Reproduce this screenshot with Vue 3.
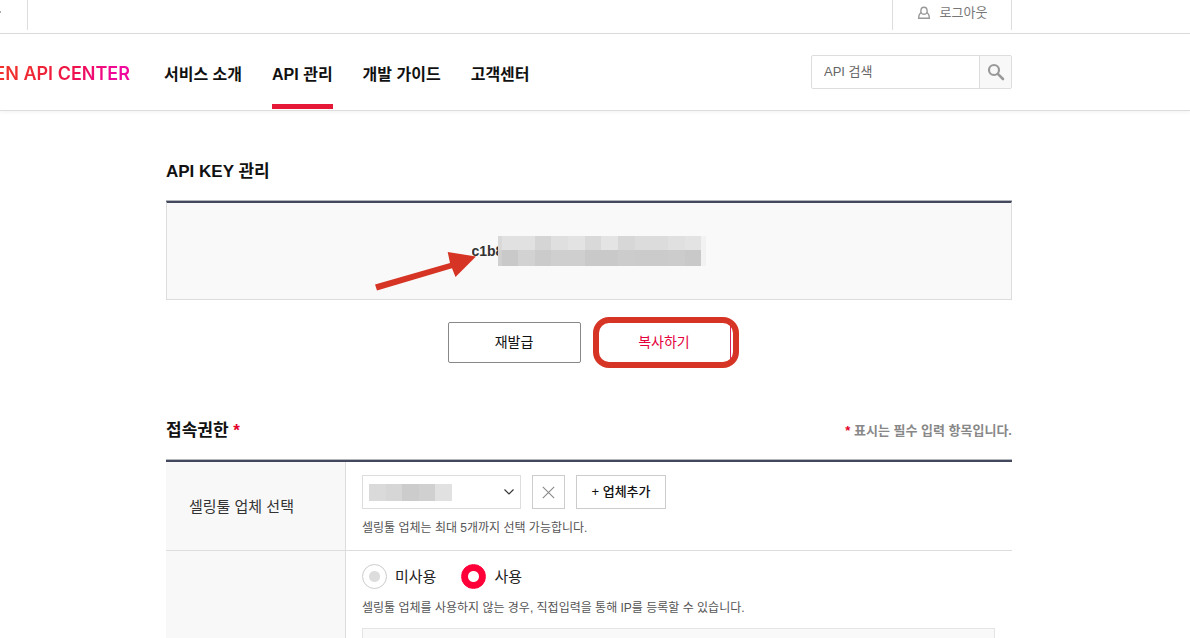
<script setup>
import { ref } from 'vue'

const menus = [
  { label: '서비스 소개', active: false },
  { label: 'API 관리', active: true },
  { label: '개발 가이드', active: false },
  { label: '고객센터', active: false },
]
const keyword = ref('')
const usage = ref('Y')
const keyMask = [
  '#d9d9d9', '#e1e1e1', '#e1e1e1', '#d5d5d5', '#dfdfdf', '#e3e3e3', '#d9d9d9', '#e4e4e4', '#d7d7d7', '#dcdcdc', '#dcdcdc', '#e0e0e0', '#e3e3e3', '#f2f2f2',
  '#d0d0d0', '#c9c9c9', '#d2d2d2', '#cbcbcb', '#cfcfcf', '#cfcfcf', '#c9c9c9', '#c9c9c9', '#cccccc', '#cbcbcb', '#cbcbcb', '#cccccc', '#c9c9c9', '#f2f2f2',
]
const vendorMask = ['#dadada', '#d6d6d6', '#cccccc', '#d0d0d0', '#e1e1e1']
</script>

<template>
  <div class="page">
    <div class="topbar">
      <div class="top-left">
        <svg width="3" height="4" viewBox="0 0 3 4" aria-hidden="true"><path d="M0 1l1 1-1 1" fill="none" stroke="#aaa" /></svg>
      </div>
      <a class="logout" href="#">
        <svg width="14" height="14" viewBox="0 0 14 14" aria-hidden="true">
          <path d="M3.900 7V4.800a3.100 3.600 0 0 1 6.200 0V7" />
          <path d="M4.200 6.800C2.300 7.400 1.700 8.600 1.700 12.300h10.600c0-3.700-.6-4.900-2.500-5.500C8.500 8.800 5.500 8.800 4.200 6.800z" />
        </svg>
        로그아웃
      </a>
    </div>

    <header class="header">
      <a class="logo" href="#"><span>EN API CENTER</span></a>
      <nav class="nav">
        <a v-for="m in menus" :key="m.label" href="#" :class="{ active: m.active }">{{ m.label }}</a>
      </nav>
      <form class="search" @submit.prevent>
        <input v-model="keyword" type="text" placeholder="API 검색" aria-label="API 검색" />
        <button type="submit" aria-label="검색">
          <svg width="18" height="18" viewBox="0 0 18 18" aria-hidden="true">
            <circle cx="7" cy="7" r="5" fill="none" stroke="#999" stroke-width="2.200" />
            <path d="M10.800 10.800L16 16" stroke="#999" stroke-width="2.600" stroke-linecap="round" />
          </svg>
        </button>
      </form>
    </header>

    <main class="content">
      <h2>API KEY 관리</h2>
      <div class="keybox">
        <div class="key">
          <strong>c1b8</strong>
          <div class="key-mask"><i v-for="(c, i) in keyMask" :key="i" :style="{ background: c }"></i></div>
          <svg class="arrow" width="102" height="40" viewBox="0 0 102 40" aria-hidden="true">
            <path d="M0 32.500L75 11 72.700 0 101 4.500 80.500 25 77 16.200 2 38.500z" fill="#d63526" />
          </svg>
        </div>
      </div>
      <div class="actions">
        <button class="btn" type="button">재발급</button>
        <div class="marked">
          <button class="btn primary" type="button">복사하기</button>
          <span class="ring"></span>
        </div>
      </div>

      <div class="section-head">
        <h2>접속권한 <em>*</em></h2>
        <p><em>*</em> 표시는 필수 입력 항목입니다.</p>
      </div>
      <table class="form">
        <tbody>
          <tr>
            <th scope="row"><label for="vendor">셀링툴 업체 선택</label></th>
            <td>
              <div class="vendor-row">
                <div class="select">
                  <select id="vendor"><option></option></select>
                  <div class="vendor-mask"><i v-for="(c, i) in vendorMask" :key="i" :style="{ background: c }"></i></div>
                  <svg class="chevron" width="12" height="8" viewBox="0 0 12 8" aria-hidden="true"><path d="M1.500 1.500L6 6l4.500-4.500" fill="none" stroke="#333" stroke-width="1.100" /></svg>
                </div>
                <button class="remove" type="button" aria-label="삭제">
                  <svg width="13" height="13" viewBox="0 0 13 13" aria-hidden="true"><path d="M.8.8l11.400 11.400M12.200.8L.8 12.200" stroke="#888" stroke-width="1.100" /></svg>
                </button>
                <button class="add" type="button">+ 업체추가</button>
              </div>
              <p class="help">셀링툴 업체는 최대 5개까지 선택 가능합니다.</p>
            </td>
          </tr>
          <tr>
            <th scope="row"></th>
            <td>
              <div class="radios">
                <label><input v-model="usage" type="radio" name="usage" value="N" />미사용</label>
                <label><input v-model="usage" type="radio" name="usage" value="Y" />사용</label>
              </div>
              <p class="help">셀링툴 업체를 사용하지 않는 경우, 직접입력을 통해 IP를 등록할 수 있습니다.</p>
              <div class="ip-panel"></div>
            </td>
          </tr>
        </tbody>
      </table>
    </main>
  </div>
</template>

<style>
body {
  background: #fff;
}
</style>

<style scoped>
* {
  box-sizing: border-box;
}
.page {
  height: 100vh;
  overflow: hidden;
  font-family: "Liberation Sans", "Noto Sans CJK KR", sans-serif;
  color: #111;
}
a {
  color: inherit;
  text-decoration: none;
}
button,
input,
select {
  margin: 0;
  padding: 0;
  font-family: inherit;
}
button {
  cursor: pointer;
}
h2,
p {
  margin: 0;
}
em {
  font-style: normal;
  color: #e4002b;
}
svg {
  display: block;
}
.topbar {
  display: flex;
  justify-content: space-between;
  align-items: flex-start;
  height: 34px;
  padding-right: 178px;
  border-bottom: 1px solid #ddd;
}
.top-left {
  width: 28px;
  height: 30px;
  padding-top: 10px;
  border-right: 1px solid #ddd;
}
.logout {
  display: flex;
  justify-content: center;
  align-items: center;
  gap: 9px;
  width: 120px;
  height: 30px;
  padding-bottom: 5px;
  border: solid #ddd;
  border-width: 0 1px;
  font-size: 13px;
  line-height: 20px;
  color: #777;
}
.logout svg {
  fill: none;
  stroke: #999;
  stroke-width: 1.4;
}
.header {
  display: flex;
  align-items: center;
  height: 77px;
  padding-right: 178px;
  border-bottom: 1px solid #ddd;
  box-shadow: 0 1px 4px rgba(0, 0, 0, 0.06);
}
.logo {
  display: flex;
  justify-content: flex-end;
  width: 130px;
  padding-top: 4px;
  white-space: nowrap;
  font: 600 18px/24px Inter, sans-serif;
}
.logo span {
  background: linear-gradient(120deg, #f0302d 20%, #ee1247 55%, #f0079b 85%);
  background-clip: text;
  color: transparent;
}
.nav {
  display: flex;
  flex: 1;
  align-self: stretch;
  gap: 30px;
  padding-left: 34px;
}
.nav a {
  height: 75px;
  padding-top: 29px;
  border-bottom: 5px solid transparent;
  font-size: 16px;
  line-height: 24px;
  font-weight: 700;
  white-space: nowrap;
}
.nav .active {
  border-color: #e51937;
}
.search {
  display: flex;
  width: 201px;
  height: 34px;
  border: 1px solid #ddd;
  border-radius: 2px;
}
.search input {
  flex: 1;
  min-width: 0;
  padding: 0 0 2px 12px;
  border: 0;
  background: none;
  font-size: 13px;
}
.search input::placeholder {
  color: #666;
}
.search button {
  display: grid;
  place-items: center;
  width: 32px;
  border: 0;
  border-left: 1px solid #ddd;
  background: #f8f8f8;
}
.content {
  margin: 0 178px 0 166px;
}
h2 {
  padding-top: 49px;
  font-size: 17px;
  line-height: 24px;
}
.keybox {
  display: flex;
  justify-content: center;
  align-items: center;
  height: 99px;
  margin-top: 17px;
  border: 1px solid #ddd;
  border-top: 2px solid #43485c;
  box-shadow: 0 -1px 0 #b4b6be;
  background: #f9f9f9;
}
.key {
  position: relative;
  display: flex;
  align-items: center;
}
.key strong {
  width: 26px;
  overflow: hidden;
  font-size: 14px;
  line-height: 20px;
  color: #333;
}
.key-mask {
  display: grid;
  grid-template-columns: 4px repeat(12, 1fr) 5px;
  grid-template-rows: 14px 16px;
  width: 209px;
}
.arrow {
  position: absolute;
  left: -97px;
  top: 16px;
}
.actions {
  display: flex;
  justify-content: center;
  gap: 17px;
  margin-top: 22px;
}
.btn {
  width: 133px;
  height: 41px;
  padding-bottom: 4px;
  border: 1px solid #888;
  border-radius: 2px;
  background: #fff;
  color: #111;
  font-size: 14px;
}
.btn.primary {
  display: block;
  border-color: #d6245a;
  color: #e4003a;
}
.marked {
  position: relative;
}
.ring {
  position: absolute;
  inset: -5px -8px -5px -5px;
  border: 6px solid #d63526;
  border-radius: 16px;
  pointer-events: none;
}
.section-head {
  display: flex;
  justify-content: space-between;
  align-items: flex-end;
  margin-top: 7px;
}
.section-head p {
  font-size: 13px;
  line-height: 24px;
  font-weight: 700;
  color: #888;
}
.form {
  width: 100%;
  margin-top: 17px;
  table-layout: fixed;
  border-spacing: 0;
  border-top: 2px solid #43485c;
  box-shadow: 0 -1px 0 #b4b6be;
}
th {
  width: 180px;
  padding: 0 0 2px 23px;
  border: solid #ddd;
  border-width: 0 1px 1px 0;
  background: #f8f8f8;
  text-align: left;
  font-size: 15px;
  font-weight: 400;
  color: #333;
}
td {
  padding: 13px 17px 12px 16px;
  border-bottom: 1px solid #ddd;
  vertical-align: top;
}
.vendor-row {
  display: flex;
  gap: 11px;
}
.select {
  position: relative;
  width: 159px;
  height: 34px;
}
.select select {
  width: 100%;
  height: 100%;
  border: 1px solid #ddd;
  border-radius: 0;
  background: #fff;
  appearance: none;
}
.vendor-mask {
  position: absolute;
  left: 7px;
  top: 9px;
  display: grid;
  grid-template-columns: repeat(5, 1fr);
  width: 83px;
  height: 17px;
  pointer-events: none;
}
.chevron {
  position: absolute;
  right: 6px;
  top: 13px;
  pointer-events: none;
}
.remove,
.add {
  height: 34px;
  border: 1px solid #ccc;
  background: #fff;
}
.remove {
  display: grid;
  place-items: center;
  width: 33px;
}
.add {
  width: 90px;
  padding-bottom: 4px;
  font-size: 13px;
  font-weight: 500;
  color: #111;
}
.help {
  margin-top: 9px;
  font-size: 12px;
  line-height: 20px;
  color: #555;
  white-space: nowrap;
}
.radios {
  display: flex;
  gap: 25px;
  height: 25px;
}
.radios label {
  display: flex;
  align-items: center;
  gap: 8px;
  font-size: 15px;
  line-height: 24px;
  color: #222;
}
.radios input {
  width: 25px;
  height: 25px;
  border: 1px solid #ccc;
  border-radius: 50%;
  background: radial-gradient(circle, #ddd 5px, #fff 6px);
  appearance: none;
}
.radios input:checked {
  border-color: #ff0038;
  background: radial-gradient(circle, #fff 5px, #ff0038 6px);
}
.ip-panel {
  min-height: 80px;
  margin-top: 10px;
  border: 1px solid #e4e4e4;
  background: #f9f9f9;
}
</style>
